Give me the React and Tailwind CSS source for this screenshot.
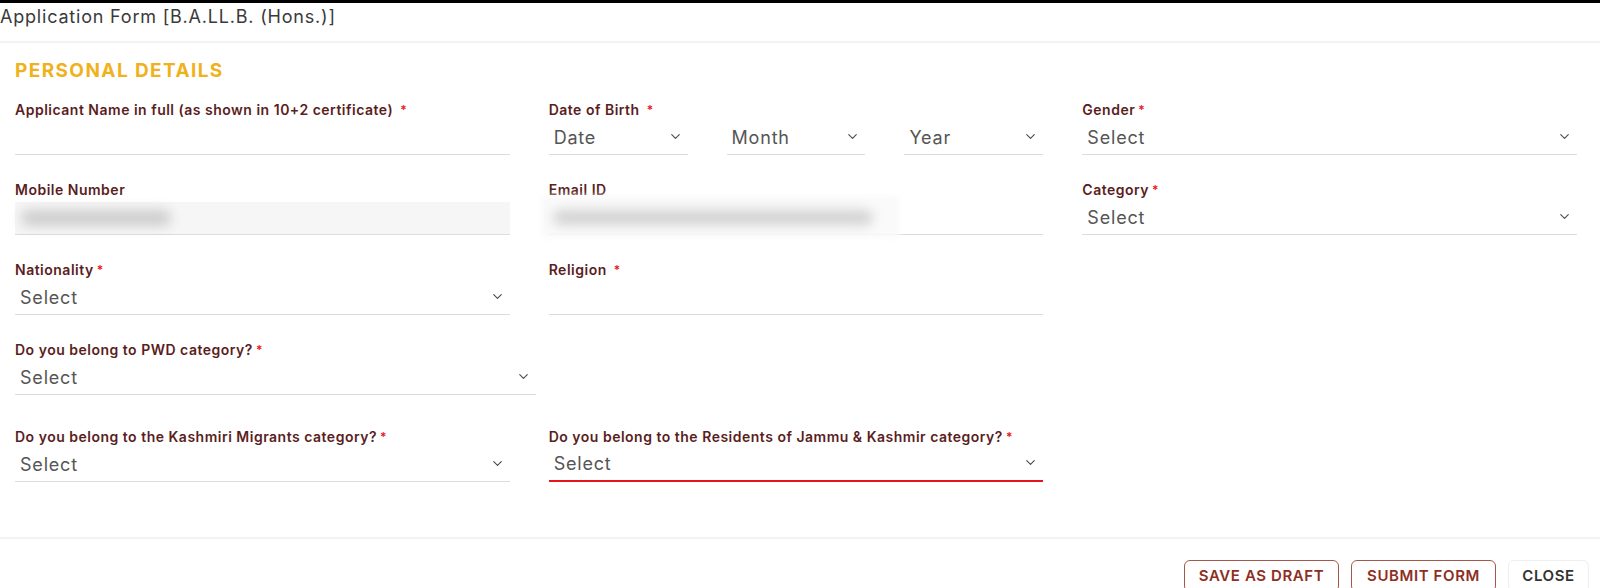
import { ChevronDown } from "lucide-react";

const Star = ({ wide }) => (
  <span className={`text-[#e8141c] text-[12px] align-top ${wide ? "ml-[7px]" : "ml-[3px]"}`}>*</span>
);

const Label = ({ text, req, wide }) => (
  <div className="h-[16px] text-[14px] leading-[16px] font-semibold tracking-[0.5px] text-[#5a1e1e] whitespace-nowrap">
    {text}
    {req && <Star wide={wide} />}
  </div>
);

const Select = ({ value = "Select", red, className = "" }) => (
  <div
    className={`flex items-center justify-between h-[37px] pl-[5px] pr-[5px] text-[18px] tracking-[0.8px] text-[#555] ${
      red ? "border-b-2 border-[#e8141c]" : "border-b border-[#dcdcdc]"
    } ${className}`}
  >
    <span className="pt-[2px]">{value}</span>
    <ChevronDown size={15} strokeWidth={1.8} className="text-[#4a4a4a]" />
  </div>
);

const Field = ({ label, req, wide, children, className = "" }) => (
  <div className={`flex flex-col ${className}`}>
    <Label text={label} req={req} wide={wide} />
    {children}
  </div>
);

export default function App() {
  return (
    <div className="w-[1600px] h-[588px] bg-white overflow-hidden font-['Inter',sans-serif]">
      <div className="h-[3px] bg-black" />
      <div className="h-[38px] pt-[2px] text-[18px] leading-[24px] tracking-[0.8px] text-[#3a3a3a]">
        Application Form [B.A.LL.B. (Hons.)]
      </div>
      <div className="h-[2px] bg-[#f3f3f3]" />

      <div className="pl-[15px] pt-[17px]">
        <h2 className="text-[19px] leading-[22px] font-bold tracking-[1.4px] text-[#f0b21c] mb-[20px]">
          PERSONAL DETAILS
        </h2>

        <div className="flex flex-col w-[1562px]">
          <div className="grid grid-cols-3 gap-x-[39px]">
            <Field label="Applicant Name in full (as shown in 10+2 certificate)" req wide>
              <div className="h-[37px] border-b border-[#dcdcdc]" />
            </Field>
            <Field label="Date of Birth" req wide>
              <div className="grid grid-cols-3 gap-x-[39px]">
                <Select value="Date" />
                <Select value="Month" />
                <Select value="Year" />
              </div>
            </Field>
            <Field label="Gender" req>
              <Select />
            </Field>
          </div>

          <div className="grid grid-cols-3 gap-x-[39px] mt-[27px]">
            <Field label="Mobile Number">
              <div className="mt-[4px] h-[33px] bg-[#f6f6f6] border-b border-[#dcdcdc] flex items-center pl-[6px]">
                <div className="w-[150px] h-[16px] bg-[#cdcdcd] rounded-full blur-[6px]" />
              </div>
            </Field>
            <Field label="Email ID">
              <div className="relative h-[37px] border-b border-[#dcdcdc]">
                <div className="absolute left-[-8px] top-[-2px] w-[358px] h-[42px] bg-[#fafafa] blur-[3px]" />
                <div className="absolute left-[4px] top-[12px] w-[320px] h-[15px] bg-[#d2d2d2] rounded-full blur-[6px]" />
              </div>
            </Field>
            <Field label="Category" req>
              <Select />
            </Field>
          </div>

          <div className="grid grid-cols-3 gap-x-[39px] mt-[27px]">
            <Field label="Nationality" req>
              <Select />
            </Field>
            <Field label="Religion" req wide>
              <div className="h-[37px] border-b border-[#dcdcdc]" />
            </Field>
          </div>

          <div className="flex mt-[27px]">
            <Field label="Do you belong to PWD category?" req className="w-[521px]">
              <Select />
            </Field>
          </div>

          <div className="grid grid-cols-3 gap-x-[39px] mt-[34px]">
            <Field label="Do you belong to the Kashmiri Migrants category?" req>
              <Select />
            </Field>
            <Field label="Do you belong to the Residents of Jammu & Kashmir category?" req>
              <Select red />
            </Field>
          </div>
        </div>
      </div>

      <div className="mt-[55px] h-[2px] bg-[#f3f3f3]" />
      <div className="flex justify-end gap-[12px] pr-[11px] pt-[21px]">
        <button className="h-[32px] w-[155px] rounded-[6px] border border-[#a4584a] text-[15px] font-semibold tracking-[0.6px] text-[#8e2e22]">
          SAVE AS DRAFT
        </button>
        <button className="h-[32px] w-[145px] rounded-[6px] border border-[#a4584a] text-[15px] font-semibold tracking-[0.6px] text-[#8e2e22]">
          SUBMIT FORM
        </button>
        <button className="h-[32px] w-[81px] rounded-[6px] border border-[#eeeeee] text-[15px] font-semibold tracking-[0.6px] text-[#333]">
          CLOSE
        </button>
      </div>
    </div>
  );
}
